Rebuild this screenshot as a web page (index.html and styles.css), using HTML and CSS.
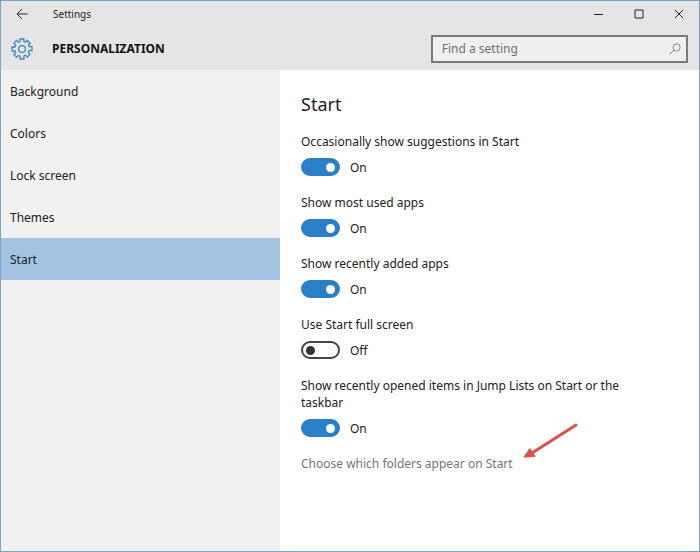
FILE: index.html
```html
<!DOCTYPE html>
<html lang="en">

<head>
  <meta charset="UTF-8" />
  <meta name="viewport" content="width=device-width, initial-scale=1.0" />
  <title>Settings</title>
  <link rel="stylesheet" href="styles.css">
</head>

<body>
  <div class="window">
    <header class="header">
      <div class="titlebar">
        <button class="back" type="button" aria-label="Back">
          <svg width="12" height="12" viewBox="0 0 12 12"><path d="M11.5 6H1.2M6 1L1 6l5 5" /></svg>
        </button>
        <span class="title">Settings</span>
        <div class="controls">
          <button type="button" aria-label="Minimize">
            <svg width="10" height="10" viewBox="0 0 10 10"><path d="M0 5.5h9" /></svg>
          </button>
          <button type="button" aria-label="Maximize">
            <svg width="10" height="10" viewBox="0 0 10 10"><path d="M1 1h8v8H1z" /></svg>
          </button>
          <button type="button" aria-label="Close">
            <svg width="10" height="10" viewBox="0 0 10 10"><path d="M.8.8l8.4 8.4M9.2.8L.8 9.2" /></svg>
          </button>
        </div>
      </div>
      <div class="topbar">
        <svg class="gear" width="22" height="22" viewBox="0 0 22 22">
          <path d="M9.1 3.6V1h3.8v2.6l1.6.7L16.4 2.5l2.7 2.7-1.8 1.9.7 1.6H21v4h-3l-.7 1.7 1.8 1.9-2.7 2.7-1.9-1.8-1.6.7V21H9.1v-2.8l-1.6-.7-1.9 1.8-2.7-2.7 1.8-1.9-.7-1.7H1v-4h3l.7-1.9-1.8-1.9 2.7-2.7 1.9 1.8z" />
          <circle cx="11" cy="11" r="3.4" />
        </svg>
        <h2>PERSONALIZATION</h2>
        <div class="search">
          <input type="text" placeholder="Find a setting" aria-label="Find a setting" />
          <svg width="12" height="12" viewBox="0 0 12 12"><circle cx="7.6" cy="4.4" r="3.6" /><path d="M5 7L.6 11.4" /></svg>
        </div>
      </div>
    </header>

    <div class="content">
      <nav class="sidebar">
        <a href="#">Background</a>
        <a href="#">Colors</a>
        <a href="#">Lock screen</a>
        <a href="#">Themes</a>
        <a class="current" href="#">Start</a>
      </nav>

      <main class="main">
        <h1>Start</h1>
        <div class="option">
          <label for="suggestions">Occasionally show suggestions in Start</label>
          <div class="switch"><input type="checkbox" id="suggestions" checked /><span>On</span></div>
        </div>
        <div class="option">
          <label for="most-used">Show most used apps</label>
          <div class="switch"><input type="checkbox" id="most-used" checked /><span>On</span></div>
        </div>
        <div class="option">
          <label for="recent-apps">Show recently added apps</label>
          <div class="switch"><input type="checkbox" id="recent-apps" checked /><span>On</span></div>
        </div>
        <div class="option">
          <label for="full-screen">Use Start full screen</label>
          <div class="switch"><input type="checkbox" id="full-screen" /><span>Off</span></div>
        </div>
        <div class="option">
          <label for="jump-lists">Show recently opened items in Jump Lists on Start or the taskbar</label>
          <div class="switch"><input type="checkbox" id="jump-lists" checked /><span>On</span></div>
        </div>
        <div class="folders">
          <a href="#">Choose which folders appear on Start</a>
          <svg class="arrow" width="56" height="38" viewBox="0 0 56 38">
            <path class="shaft" d="M53 3L9 31" />
            <path class="head" d="M1 35L7 26.5l5 8z" />
          </svg>
        </div>
      </main>
    </div>
  </div>
</body>

</html>
```
FILE: styles.css
```css
* {
  margin: 0;
  padding: 0;
  box-sizing: border-box;
}

body {
  font-family: "Noto Sans", "Open Sans", sans-serif;
  font-size: 12px;
  line-height: 17px;
  color: #222;
}

a {
  color: inherit;
  text-decoration: none;
}

button {
  border: 0;
  background: none;
}

svg {
  display: block;
  fill: none;
  stroke: #222;
}

.window {
  display: flex;
  flex-direction: column;
  min-height: 100vh;
  border: 1px solid #7da2bd;
  background-color: #fff;
}

/* title bar and search */
.header {
  background-color: #e5e5e5;
}

.titlebar {
  display: flex;
  align-items: center;
  height: 26px;
  padding-left: 15px;
}

.back {
  width: 37px;
}

.title {
  font-size: 10px;
}

.controls {
  display: flex;
  margin-left: auto;
}

.controls button {
  display: flex;
  justify-content: center;
  width: 40px;
}

.topbar {
  display: flex;
  align-items: center;
  height: 43px;
  padding: 0 11px 0 10px;
}

.gear {
  stroke: #3f87c4;
  stroke-width: 1.3;
}

.topbar h2 {
  margin-left: 19px;
  font-size: 12px;
  font-weight: 700;
  color: #111;
}

.search {
  display: flex;
  align-items: center;
  width: 38%;
  max-width: 258px;
  height: 28px;
  margin-left: auto;
  padding: 0 5px 0 9px;
  border: 2px solid #7a7a7a;
  background-color: #efefef;
}

.search input {
  flex: 1;
  min-width: 0;
  border: 0;
  outline: 0;
  background: none;
  font: inherit;
}

.search input::placeholder {
  color: #707070;
  opacity: 1;
}

.search svg {
  stroke: #8a8a8a;
}

/* left menu */
.content {
  display: flex;
  flex: 1;
}

.sidebar {
  width: 40%;
  max-width: 279px;
  background-color: #f1f1f1;
}

.sidebar a {
  display: flex;
  align-items: center;
  height: 42px;
  padding: 0 9px;
}

.sidebar .current {
  background-color: #a2c4e2;
}

/* right side */
.main {
  flex: 1;
  padding: 21px;
}

.main h1 {
  margin-bottom: 16px;
  font-size: 18px;
  font-weight: 400;
  line-height: 26px;
}

.option {
  max-width: 340px;
  margin-bottom: 18px;
}

.option label {
  display: block;
}

.switch {
  display: flex;
  align-items: center;
  gap: 10px;
  height: 18px;
  margin-top: 8px;
}

.switch input {
  appearance: none;
  display: flex;
  align-items: center;
  width: 39px;
  height: 18px;
  padding: 0 3px;
  border: 2px solid #444;
  border-radius: 9px;
}

.switch input::before {
  content: "";
  width: 9px;
  height: 9px;
  border-radius: 50%;
  background-color: #333;
}

.switch input:checked {
  justify-content: flex-end;
  border-color: #2a80c8;
  background-color: #2a80c8;
}

.switch input:checked::before {
  background-color: #fff;
}

.folders {
  position: relative;
  width: fit-content;
  color: #767676;
}

/* arrow pointing at the link */
.arrow {
  position: absolute;
  left: 100%;
  bottom: 12px;
  margin-left: 10px;
}

.arrow .shaft {
  stroke: #d9534c;
  stroke-width: 3;
  stroke-linecap: round;
}

.arrow .head {
  fill: #d9534c;
  stroke: #d9534c;
}
```
